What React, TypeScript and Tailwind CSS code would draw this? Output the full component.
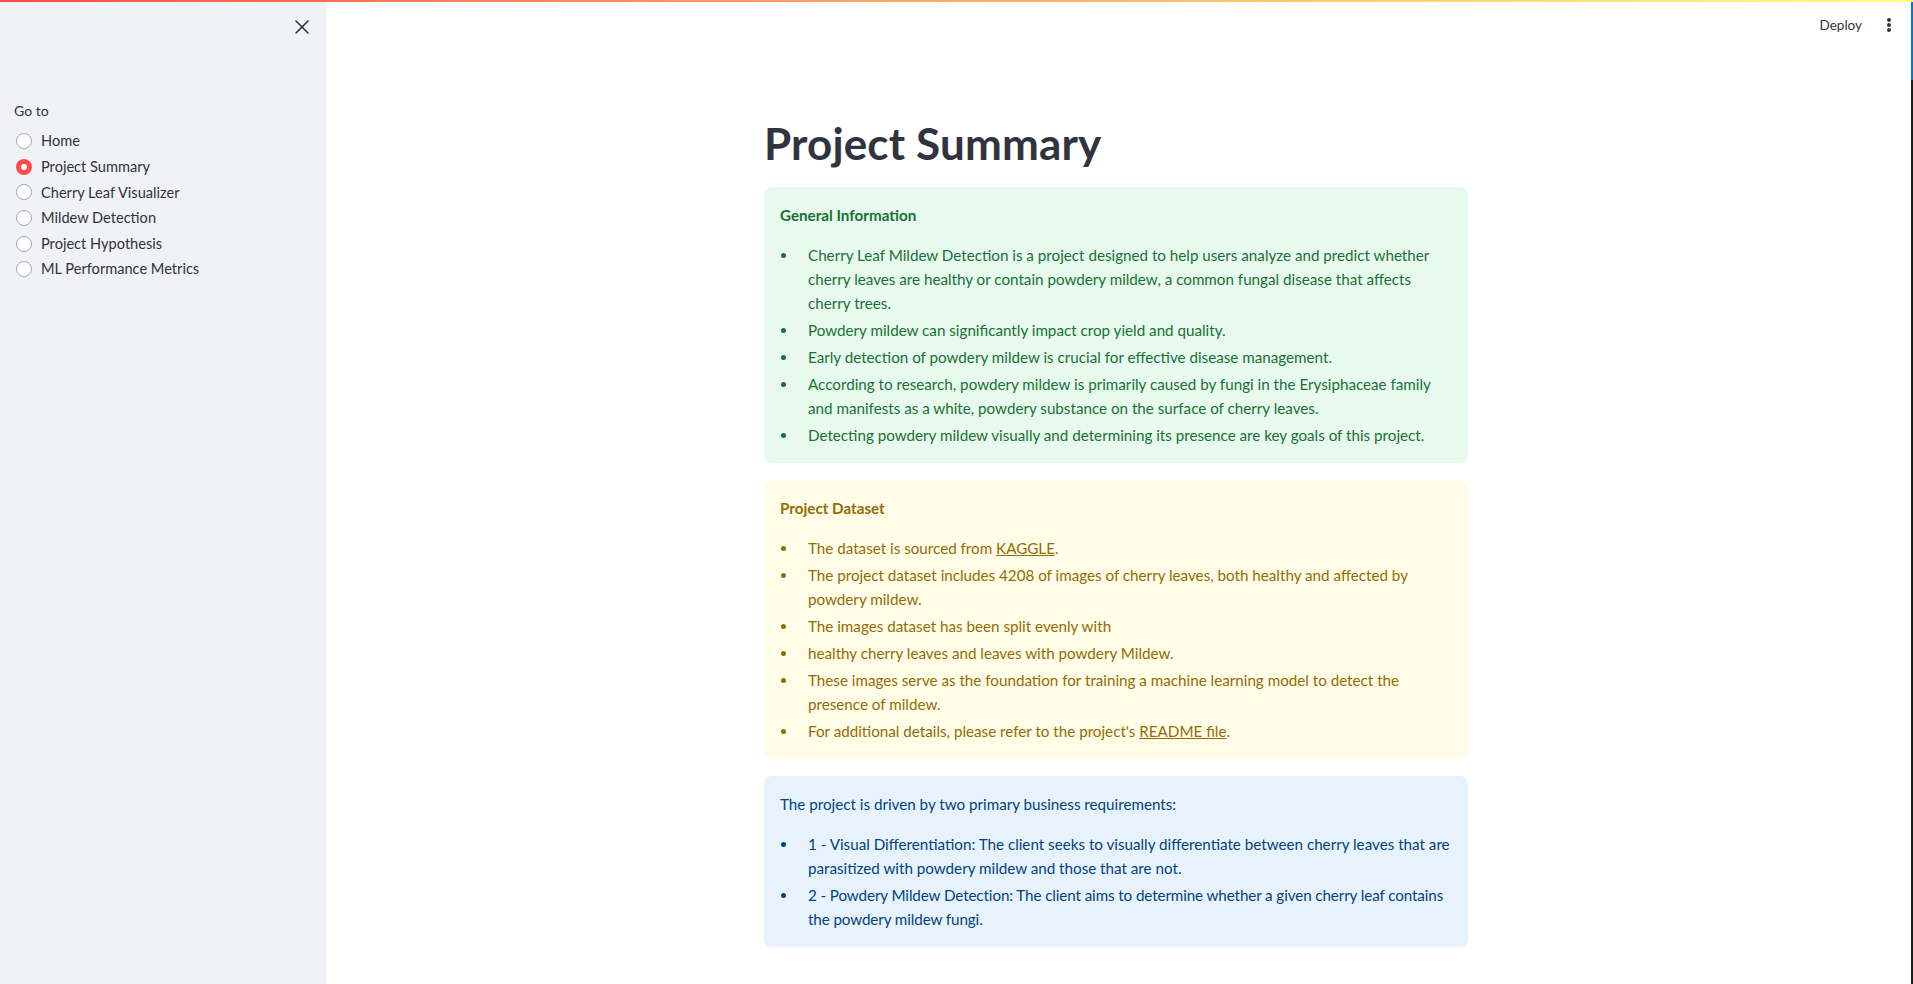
import React from "react";
import { X } from "lucide-react";

const FONT = '"Lato", "Noto Sans", sans-serif';

type Item = React.ReactNode;

function Box({ bg, color, heading, bold, items }: { bg: string; color: string; heading: string; bold: boolean; items: Item[] }) {
  return (
    <div className={`rounded-lg px-4 pt-4 pb-4 ${bg} ${color}`}>
      <p className={`text-[15.2px] leading-6 ${bold ? "font-bold" : ""}`}>{heading}</p>
      <ul className="mt-4 flex flex-col gap-[3px]">
        {items.map((it, i) => (
          <li key={i} className="flex text-[15.2px] leading-6">
            <span className="flex h-6 w-[28px] shrink-0 items-center">
              <span className="ml-[1px] h-[5px] w-[5px] rounded-full bg-current" />
            </span>
            <span>{it}</span>
          </li>
        ))}
      </ul>
    </div>
  );
}

export default function App() {
  const nav = ["Home", "Project Summary", "Cherry Leaf Visualizer", "Mildew Detection", "Project Hypothesis", "ML Performance Metrics"];
  return (
    <div className="relative flex h-[984px] w-full overflow-hidden bg-white text-[#31333f]" style={{ fontFamily: FONT }}>
      <div className="absolute left-0 right-0 top-0 z-10 h-[2px] bg-gradient-to-r from-[#ff4b4b] to-[#fffd80]" />
      <aside className="flex w-[326px] shrink-0 flex-col bg-[#f0f2f6]">
        <div className="flex justify-end pr-[12px] pt-[15px]">
          <X size={24} strokeWidth={1.6} className="text-[#31333f]" />
        </div>
        <div className="mt-[62px] pl-[14px] text-[14px] leading-5">Go to</div>
        <div className="mt-[7.5px] flex flex-col">
          {nav.map((n, i) => (
            <div key={n} className="flex h-[25.6px] items-center">
              <span className="ml-[16px] flex h-4 w-4 items-center justify-center">
                {i === 1 ? (
                  <span className="flex h-4 w-4 items-center justify-center rounded-full bg-[#ff4b4b]">
                    <span className="h-[6px] w-[6px] rounded-full bg-white" />
                  </span>
                ) : (
                  <span className="h-4 w-4 rounded-full border border-[#a3a8b4] bg-white" />
                )}
              </span>
              <span className="ml-[9px] text-[14.6px]">{n}</span>
            </div>
          ))}
        </div>
      </aside>
      <main className="relative flex-1 pr-[7px]">
        <div className="absolute right-[16px] top-[13px] flex items-center gap-[19px]">
          <span className="text-[13.5px] leading-6">Deploy</span>
          <span className="flex w-4 flex-col items-center gap-[1.5px]">
            <span className="h-[3.5px] w-[3.5px] rounded-full bg-[#31333f]" />
            <span className="h-[3.5px] w-[3.5px] rounded-full bg-[#31333f]" />
            <span className="h-[3.5px] w-[3.5px] rounded-full bg-[#31333f]" />
          </span>
        </div>
        <div className="absolute right-0 top-[2px] flex h-[982px] w-[2px] flex-col">
          <div className="h-[78px] bg-[#0078d4]" />
          <div className="flex-1 bg-[#1c1c1c]" />
        </div>
        <div className="mx-auto w-[704px] pt-[117px]">
          <h1 className="text-[44px] font-bold leading-[53px] tracking-[0.15px]">Project Summary</h1>
          <div className="mt-[17px] flex flex-col gap-[17px]">
            <Box
              bg="bg-[#e8f9ee]"
              color="text-[#177233]"
              heading="General Information"
              bold
              items={[
                "Cherry Leaf Mildew Detection is a project designed to help users analyze and predict whether cherry leaves are healthy or contain powdery mildew, a common fungal disease that affects cherry trees.",
                "Powdery mildew can significantly impact crop yield and quality.",
                "Early detection of powdery mildew is crucial for effective disease management.",
                "According to research, powdery mildew is primarily caused by fungi in the Erysiphaceae family and manifests as a white, powdery substance on the surface of cherry leaves.",
                "Detecting powdery mildew visually and determining its presence are key goals of this project.",
              ]}
            />
            <Box
              bg="bg-[#fffce7]"
              color="text-[#926c05]"
              heading="Project Dataset"
              bold
              items={[
                <>The dataset is sourced from <a className="underline">KAGGLE</a>.</>,
                "The project dataset includes 4208 of images of cherry leaves, both healthy and affected by powdery mildew.",
                "The images dataset has been split evenly with",
                "healthy cherry leaves and leaves with powdery Mildew.",
                "These images serve as the foundation for training a machine learning model to detect the presence of mildew.",
                <>For additional details, please refer to the project's <a className="underline">README file</a>.</>,
              ]}
            />
            <Box
              bg="bg-[#e8f2fc]"
              color="text-[#004280]"
              heading="The project is driven by two primary business requirements:"
              bold={false}
              items={[
                "1 - Visual Differentiation: The client seeks to visually differentiate between cherry leaves that are parasitized with powdery mildew and those that are not.",
                <span className="tracking-[-0.1px]">2 - Powdery Mildew Detection: The client aims to determine whether a given cherry leaf contains the powdery mildew fungi.</span>,
              ]}
            />
          </div>
        </div>
      </main>
    </div>
  );
}
